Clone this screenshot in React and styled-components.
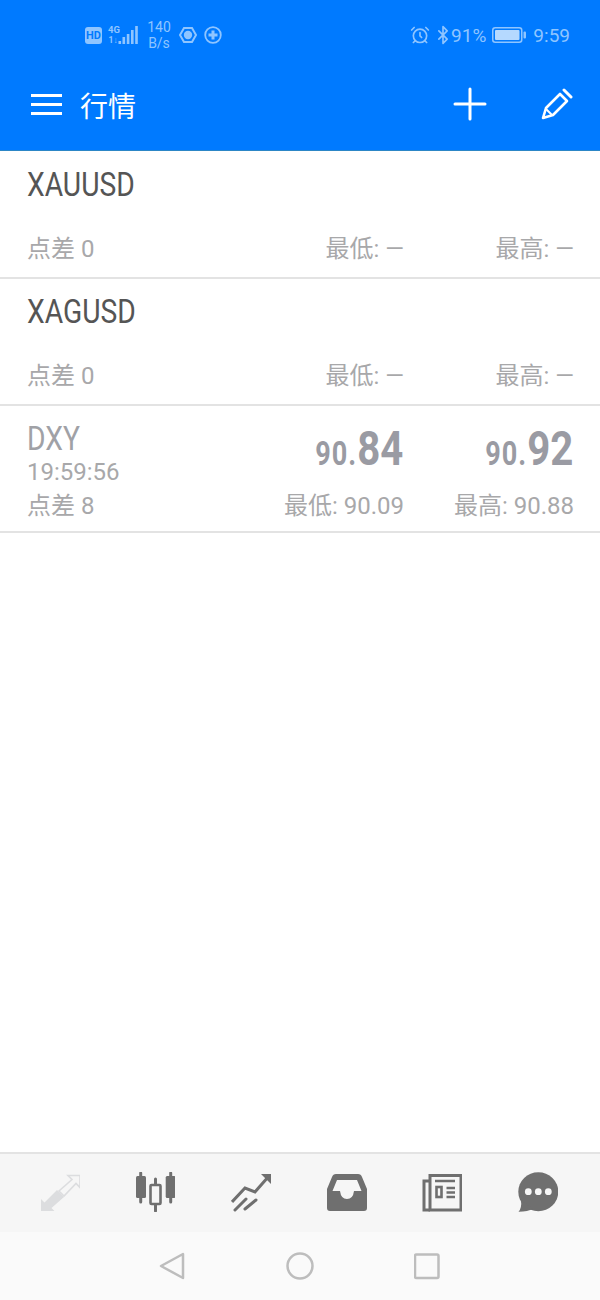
import React from 'react'
import styled, { createGlobalStyle } from 'styled-components'
import { AlarmClock, Bluetooth } from 'lucide-react'

const rows = [
    { symbol: 'XAUUSD', spread: '点差 0', low: '最低: —', high: '最高: —' },
    { symbol: 'XAGUSD', spread: '点差 0', low: '最低: —', high: '最高: —' },
    {
        symbol: 'DXY',
        time: '19:59:56',
        spread: '点差 8',
        low: '最低: 90.09',
        high: '最高: 90.88',
        bid: ['90.', '84'],
        ask: ['90.', '92'],
    },
]

const App = () => {
    return (
        <Wrapper>
            <GlobalStyle />
            <Header>
                <StatusBar>
                    <StatusGroup>
                        <HdBadge>HD</HdBadge>
                        <NetworkIcon />
                        <Speed>140<br />B/s</Speed>
                        <HexIcon />
                        <PlusCircleIcon />
                    </StatusGroup>
                    <StatusGroup>
                        <AlarmClock size={20} strokeWidth={2} />
                        <BluetoothIcon size={20} strokeWidth={2} />
                        <StatusText>91%</StatusText>
                        <BatteryIcon />
                        <StatusText>9:59</StatusText>
                    </StatusGroup>
                </StatusBar>
                <Toolbar>
                    <MenuIcon />
                    <Title>行情</Title>
                    <ToolbarActions>
                        <AddIcon />
                        <PencilIcon />
                    </ToolbarActions>
                </Toolbar>
            </Header>

            <QuoteList>
                {rows.map(row => (
                    <QuoteRow key={row.symbol}>
                        <SymbolColumn>
                            <SymbolBlock>
                                <Symbol $live={!!row.bid}>{row.symbol}</Symbol>
                                {row.time && <QuoteTime>{row.time}</QuoteTime>}
                            </SymbolBlock>
                            <Muted>{row.spread}</Muted>
                        </SymbolColumn>
                        <PriceColumn>
                            {row.bid && <Price><small>{row.bid[0]}</small>{row.bid[1]}</Price>}
                            <Muted>{row.low}</Muted>
                        </PriceColumn>
                        <PriceColumn>
                            {row.ask && <Price><small>{row.ask[0]}</small>{row.ask[1]}</Price>}
                            <Muted>{row.high}</Muted>
                        </PriceColumn>
                    </QuoteRow>
                ))}
            </QuoteList>

            <TabBar>
                <Tab><TradeIcon /></Tab>
                <Tab><CandleIcon /></Tab>
                <Tab><ChartIcon /></Tab>
                <Tab><InboxIcon /></Tab>
                <Tab><NewsIcon /></Tab>
                <Tab><ChatIcon /></Tab>
            </TabBar>

            <NavBar>
                <NavIcon viewBox="0 0 28 28">
                    <path d="M25 2 V26 L3 14 Z" strokeLinejoin="round" />
                </NavIcon>
                <NavIcon viewBox="0 0 28 28">
                    <circle cx="14" cy="14" r="12.5" />
                </NavIcon>
                <NavIcon viewBox="0 0 28 28">
                    <rect x="1" y="2.5" width="23.5" height="23.5" rx="1.5" />
                </NavIcon>
            </NavBar>
        </Wrapper>
    )
}

export default App

/* status bar icons */

const NetworkIcon = () => (
    <svg width="30" height="20" viewBox="0 0 30 20" fill="#8fc5ff">
        <text x="0" y="8" fontSize="9.5" fontWeight="700" fontFamily="Roboto, sans-serif">4G</text>
        <text x="0.5" y="18" fontSize="8.5" fontWeight="700" fontFamily="Roboto, sans-serif">1↓</text>
        <rect x="10.5" y="16" width="2.6" height="3" />
        <rect x="14.5" y="12" width="2.6" height="7" />
        <rect x="18.8" y="9" width="2.6" height="10" />
        <rect x="23" y="5" width="2.6" height="14" />
        <rect x="27.2" y="1" width="2.6" height="18" />
    </svg>
)

const HexIcon = () => (
    <StatusSvg $left={8} width="18" height="18" viewBox="0 0 18 18">
        <path d="M5 2 H13 L17 9 L13 16 H5 L1 9 Z" fill="none" stroke="#8fc5ff" strokeWidth="2" />
        <circle cx="9" cy="9" r="4.2" fill="#8fc5ff" />
    </StatusSvg>
)

const PlusCircleIcon = () => (
    <StatusSvg $left={7} width="18" height="18" viewBox="0 0 18 18">
        <circle cx="9" cy="9" r="7.8" fill="none" stroke="#8fc5ff" strokeWidth="1.8" />
        <path d="M9 4.5 V13.5 M4.5 9 H13.5" stroke="#8fc5ff" strokeWidth="3" />
    </StatusSvg>
)

const BatteryIcon = () => (
    <StatusSvg $left={6} $right={6} width="35" height="16" viewBox="0 0 35 16">
        <rect x="0.75" y="0.75" width="29" height="14.5" rx="2.5" fill="none" stroke="#8fc5ff" strokeWidth="1.5" />
        <rect x="3" y="3" width="24.5" height="10" rx="1" fill="#b5d9ff" />
        <rect x="31.5" y="4.5" width="2.5" height="7" rx="1" fill="#8fc5ff" />
    </StatusSvg>
)

/* toolbar icons */

const MenuIcon = () => (
    <svg width="31" height="21" viewBox="0 0 31 21" fill="#fff">
        <rect y="0" width="31" height="3" />
        <rect y="9" width="31" height="3" />
        <rect y="18" width="31" height="3" />
    </svg>
)

const AddIcon = () => (
    <svg width="34" height="34" viewBox="0 0 34 34" stroke="#fff" strokeWidth="3" strokeLinecap="round">
        <path d="M17 2 V32 M2 17 H32" />
    </svg>
)

const PencilIcon = () => (
    <svg width="32" height="32" viewBox="0 0 32 32" fill="none" stroke="#fff" strokeWidth="2.6" strokeLinejoin="round">
        <path d="M5 20 L19 6 L26 13 L12 27 L2 30 Z" />
        <path d="M5 21 L11 27" strokeWidth="2" />
        <path d="M23 2 L30 9" strokeLinecap="round" strokeWidth="3" />
    </svg>
)

/* tab icons, 40 x 40 */

const TradeIcon = () => (
    <TabIcon viewBox="0 0 40 40">
        <path d="M1 39 V27 L4.500 30.500 L17 18 L24 25 L11.500 36 L14.500 39 Z" fill="#dcdddf" />
        <path d="M28 3.500 H40 V15.500 L36 11.500 L24 24 L19 19 L32 7.500 Z" fill="none" stroke="#dcdddf" strokeWidth="1.6" />
    </TabIcon>
)

const CandleIcon = () => (
    <TabIcon viewBox="0 0 40 40">
        <path d="M5.700 1 V30 M20.500 7 V39 M35.700 1 V30" stroke="#6f6f6f" strokeWidth="3" strokeLinecap="round" />
        <rect x="1" y="4" width="10" height="22" rx="1.500" fill="#6f6f6f" />
        <rect x="30.700" y="4" width="10" height="22" rx="1.500" fill="#6f6f6f" />
        <rect x="15.500" y="13" width="10" height="19" rx="1" fill="#f6f6f6" stroke="#6f6f6f" strokeWidth="2.600" />
    </TabIcon>
)

const ChartIcon = () => (
    <TabIcon viewBox="0 0 40 40">
        <path d="M1 30 L14 16 L24 20 L38 4" fill="none" stroke="#6f6f6f" strokeWidth="3" />
        <path d="M30 2 H40 V12 Z" fill="#6f6f6f" />
        <path d="M4 38 L15 27 M14 37 L25 28" stroke="#6f6f6f" strokeWidth="3" strokeLinecap="round" />
    </TabIcon>
)

const InboxIcon = () => (
    <TabIcon viewBox="0 0 40 40">
        <path
            fillRule="evenodd"
            fill="#6f6f6f"
            d="M9 2 H31 Q34 2 35 5 L40 17 V36 Q40 39 37 39 H3 Q0 39 0 36 V17 L5 5 Q6 2 9 2 Z M10 8 H30 L34.500 19 H27 Q26 27 20 27 Q14 27 13 19 H5.500 Z"
        />
    </TabIcon>
)

const NewsIcon = () => (
    <TabIcon viewBox="0 0 40 40">
        <g fill="none" stroke="#6f6f6f">
            <rect x="8" y="3.500" width="31" height="34.500" strokeWidth="3" />
            <path d="M8 9 H2 V38 H8" strokeWidth="3" />
            <rect x="14.500" y="15" width="5" height="10" strokeWidth="2.600" />
        </g>
        <path d="M13 9 H33 M24.500 16 H33 M24.500 20.500 H33 M24.500 25 H33" stroke="#6f6f6f" strokeWidth="2.600" />
    </TabIcon>
)

const ChatIcon = () => (
    <TabIcon viewBox="0 0 40 40">
        <ellipse cx="20.300" cy="19.700" rx="20" ry="19.500" fill="#6f6f6f" />
        <path d="M3 28 Q4 36 0.500 39.800 Q10 39.500 15 37 Z" fill="#6f6f6f" />
        <circle cx="10.300" cy="19.700" r="3.400" fill="#f6f6f6" />
        <circle cx="20.300" cy="19.700" r="3.400" fill="#f6f6f6" />
        <circle cx="30.300" cy="19.700" r="3.400" fill="#f6f6f6" />
    </TabIcon>
)

const GlobalStyle = createGlobalStyle`
    html, body {
        margin: 0;
        padding: 0;
        height: 100%;
        background: #fff;
        overflow: hidden;
    }
    body {
        font-family: Roboto, "Noto Sans CJK SC", sans-serif;
    }
`

const Wrapper = styled.div`
    width: 600px;
    height: 1300px;
    display: flex;
    flex-direction: column;
`

const Header = styled.header`
    height: 151px;
    box-sizing: border-box;
    background-color: #007aff;
    border-bottom: 1px solid #2c86c6;
    flex: none;
`

const StatusBar = styled.div`
    height: 70px;
    box-sizing: border-box;
    padding: 0 30px 0 85px;
    display: flex;
    justify-content: space-between;
    align-items: center;
    color: #8fc5ff;
`

const StatusGroup = styled.div`
    display: flex;
    align-items: center;
`

const StatusSvg = styled.svg`
    margin-left: ${p => p.$left || 0}px;
    margin-right: ${p => p.$right || 0}px;
`

const BluetoothIcon = styled(Bluetooth)`
    margin: 0 -2px 0 3px;
`

const HdBadge = styled.span`
    width: 17px;
    height: 17px;
    margin-right: 6px;
    border-radius: 3px;
    background: #8fc5ff;
    color: #007aff;
    font-size: 11px;
    font-weight: 700;
    line-height: 17px;
    text-align: center;
`

const Speed = styled.span`
    margin-left: 9px;
    width: 24px;
    font-size: 14px;
    line-height: 16px;
    text-align: center;
`

const StatusText = styled.span`
    font-size: 19px;
`

const Toolbar = styled.div`
    height: 80px;
    padding: 0 27px 11px 31px;
    box-sizing: border-box;
    display: flex;
    align-items: center;
`

const Title = styled.h1`
    margin: 0 0 0 18px;
    font-size: 28px;
    font-weight: 400;
    color: #fff;
`

const ToolbarActions = styled.div`
    margin-left: auto;
    margin-bottom: 1px;
    display: flex;
    align-items: center;
    gap: 54px;
`

const QuoteList = styled.main`
    flex: 1;
    padding-top: 1px;
`

const QuoteRow = styled.section`
    height: 127px;
    box-sizing: border-box;
    padding: 14px 26px 12px 27px;
    border-bottom: 2px solid #e3e3e3;
    display: grid;
    grid-template-columns: 1fr 170px 170px;
`

const SymbolColumn = styled.div`
    display: flex;
    flex-direction: column;
    justify-content: space-between;
`

const SymbolBlock = styled.div`
    display: flex;
    flex-direction: column;
`

const Symbol = styled.span`
    font-size: 33px;
    line-height: 38px;
    color: ${p => (p.$live ? '#a0a1a6' : '#555')};
    transform: scaleX(0.855);
    transform-origin: left;
`

const Muted = styled.span`
    font-size: 24px;
    line-height: 32px;
    color: #a8a8aa;
    white-space: nowrap;
`

const QuoteTime = styled(Muted)`
    line-height: 28px;
`

const PriceColumn = styled.div`
    display: flex;
    flex-direction: column;
    justify-content: flex-end;
    align-items: flex-end;
`

const Price = styled.span`
    font-size: 49px;
    font-weight: 700;
    line-height: 58px;
    margin: 0 1px 7px 0;
    color: #9a9ba3;
    transform: scaleX(0.82);
    transform-origin: right;
    white-space: nowrap;

    small {
        font-size: 33px;
        letter-spacing: 1.200px;
    }
`

const TabBar = styled.nav`
    height: 80px;
    flex: none;
    box-sizing: border-box;
    padding: 0 14px 0 12px;
    background: #f6f6f6;
    border-top: 2px solid #e3e3e3;
    display: grid;
    grid-template-columns: repeat(6, 1fr);
`

const Tab = styled.div`
    display: flex;
    align-items: flex-start;
    justify-content: center;
    padding-top: 18px;
`

const TabIcon = styled.svg`
    width: 40px;
    height: 40px;
`

const NavBar = styled.div`
    height: 68px;
    flex: none;
    background: #fafafa;
    display: grid;
    grid-template-columns: repeat(3, 128px);
    justify-content: center;
    align-items: center;
    justify-items: center;
`

const NavIcon = styled.svg`
    width: 28px;
    height: 28px;
    fill: none;
    stroke: #bdbdbd;
    stroke-width: 2.5;
`
